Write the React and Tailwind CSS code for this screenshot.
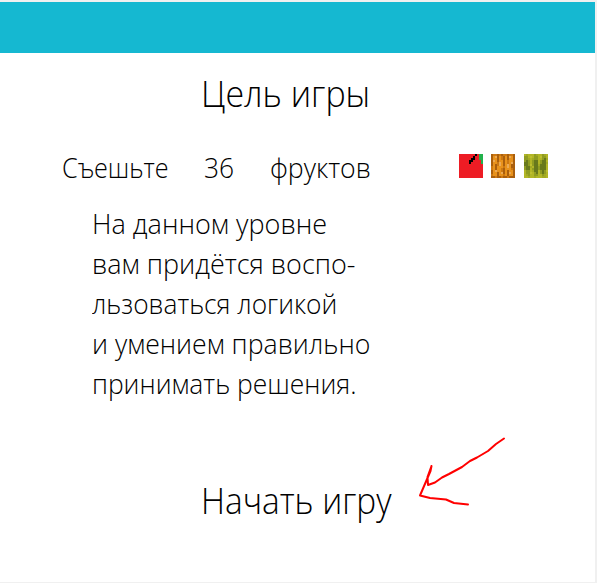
const textLines = [
  ['На данном уровне', 'scale-x-[0.966]'],
  ['вам придётся воспо-', 'scale-x-[0.963]'],
  ['льзоваться логикой', 'scale-x-[0.939]'],
  ['и умением правильно', 'scale-x-[0.952]'],
  ['принимать решения.', 'scale-x-[0.944]'],
];

const palette = {
  r: '#ed1c24', k: '#000000', g: '#22b14c',
  a: '#e8921c', b: '#aa5f0d', c: '#cc7812', d: '#ecaa55',
  m: '#b2b626', n: '#8f9c22', o: '#68791c', p: '#a2aa24', q: '#bebf30',
};

const apple = [
  'rrrrrrrrkrgg',
  'rrrrrrrkrrgg',
  'rrrrrrkkrrgg',
  'rrrrrkkrrrrg',
  'rrrrrkrrrrrg',
  ...Array(7).fill('rrrrrrrrrrrr'),
];
const orange = [
  'bccbcbccbccb',
  'badbacbabdab',
  'baabacbabaab',
  'bdabaabacaab',
  'baacdabacadb',
  'babcdabadabb',
  'cabaaacadabb',
  'cabaacbaaacb',
  'badaacbabaab',
  'baabadbabdab',
  'caabaacabaab',
  'bbcbbcbbcbbb',
];
const melon = [
  'mpmmmnpmmnpm',
  'nnmqmnnmqnnm',
  'nnpmpnnmmnop',
  'nonmnoomnoom',
  'oonmnoomnoop',
  'oonqnoopooom',
  'noopmoonooom',
  'noomnoonooom',
  'mnnmpoomnonq',
  'mnnqmnomnonm',
  'mpnmmnnmmnpm',
  'mmpmmpmmmppm',
];

function Pixels({ rows }) {
  const n = rows.length;
  return (
    <svg viewBox={`0 0 ${n} ${n}`} className="h-6 w-6" shapeRendering="crispEdges" aria-hidden="true">
      {rows.flatMap((row, y) =>
        [...row].map((c, x) => <rect key={`${x}-${y}`} x={x} y={y} width="1" height="1" fill={palette[c]} />)
      )}
    </svg>
  );
}

export default function App() {
  return (
    <div className="h-[583px] w-[597px] overflow-hidden bg-[#f0f0f0] pt-[2px] pr-[2px] pb-[1px] font-['Open_Sans',sans-serif] font-light text-black">
      <div className="relative flex h-full flex-col bg-white">
        <header className="h-[51px] shrink-0 bg-[#15b8d1]" />
        <h1 className="mt-[14px] ml-[201px] h-[54px] origin-left scale-x-[0.943] text-[36px] leading-[54px] whitespace-nowrap">
          Цель игры
        </h1>
        <div className="mt-[26px] ml-[62px] flex h-10 items-center text-[28px] leading-10 whitespace-nowrap">
          <span className="w-[142px] origin-left scale-x-[0.9]">Съешьте</span>
          <span className="w-[66px] origin-left scale-x-[0.94]">36</span>
          <span className="w-[189px] origin-left scale-x-[0.952]">фруктов</span>
          <div className="-mt-0.5 flex gap-2">
            <Pixels rows={apple} />
            <Pixels rows={orange} />
            <div className="ml-px"><Pixels rows={melon} /></div>
          </div>
        </div>
        <div className="mt-4 ml-[92px] text-[28px] leading-10 whitespace-nowrap">
          {textLines.map(([line, scale]) => (
            <div key={line} className={`origin-left ${scale}`}>{line}</div>
          ))}
        </div>
        <button className="mt-[71px] ml-[201px] h-[54px] origin-left scale-x-[0.927] self-start text-[36px] leading-[54px] whitespace-nowrap">Начать игру</button>
        <svg className="absolute top-[423px] left-[400px] h-[90px] w-[120px]" viewBox="0 0 120 90" fill="none" stroke="#ff0000" strokeWidth="2" strokeLinecap="round" strokeLinejoin="round" aria-hidden="true">
          <path d="M104 13.500L96 19L88 26L77 32.500L70 36L62 42L49 49L42 52.500L35 57.500L28 60L27.500 52L31.500 41L30.500 46L20 70.500L30 73L46 74.500L54 78L68 79.500" />
        </svg>
      </div>
    </div>
  );
}
